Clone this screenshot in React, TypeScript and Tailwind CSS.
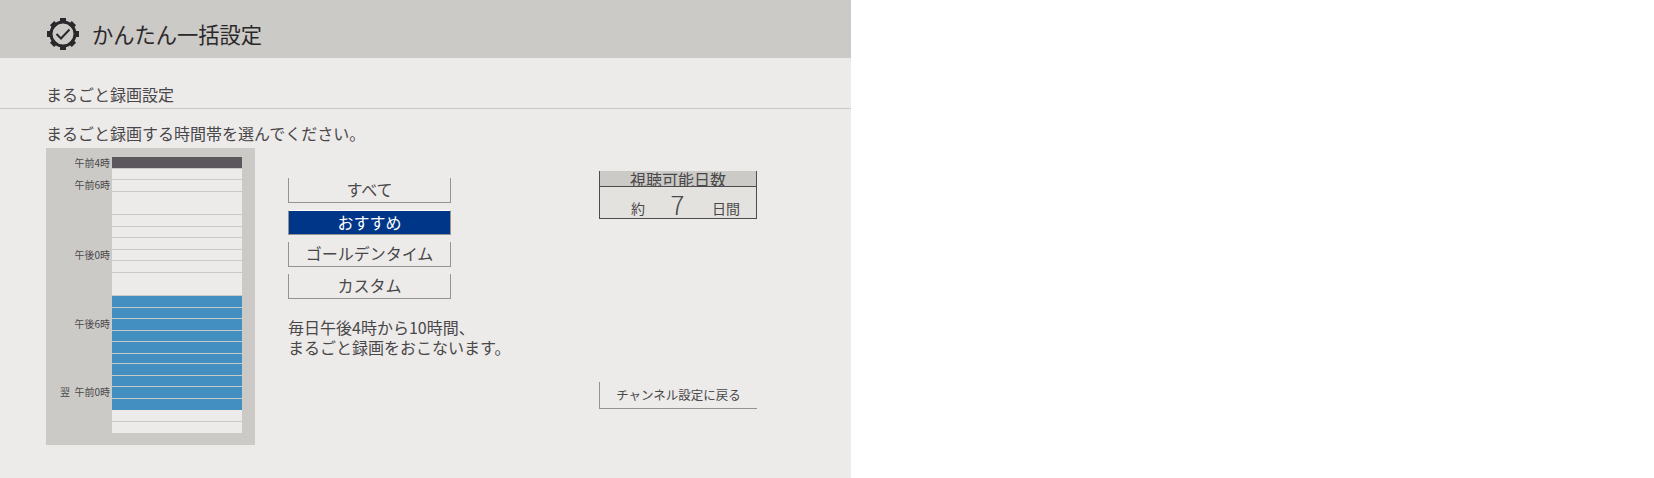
import React from 'react';

interface Slot {
  height: string;
  tone: 'dark' | 'blue' | 'empty';
  label?: string;
  noLine?: boolean;
}

const slots: Slot[] = [
  { height: 'h-[11px]', tone: 'dark', label: '午前4時', noLine: true },
  { height: 'h-[11px]', tone: 'empty' },
  { height: 'h-[12px]', tone: 'empty', label: '午前6時' },
  { height: 'h-[23px]', tone: 'empty' },
  { height: 'h-[12px]', tone: 'empty' },
  { height: 'h-[11px]', tone: 'empty' },
  { height: 'h-[12px]', tone: 'empty' },
  { height: 'h-[11px]', tone: 'empty', label: '午後0時' },
  { height: 'h-[12px]', tone: 'empty' },
  { height: 'h-[23px]', tone: 'empty' },
  { height: 'h-[12px]', tone: 'blue' },
  { height: 'h-[11px]', tone: 'blue' },
  { height: 'h-[12px]', tone: 'blue', label: '午後6時' },
  { height: 'h-[11px]', tone: 'blue' },
  { height: 'h-[12px]', tone: 'blue' },
  { height: 'h-[10px]', tone: 'blue' },
  { height: 'h-[12px]', tone: 'blue' },
  { height: 'h-[11px]', tone: 'blue' },
  { height: 'h-[12px]', tone: 'blue', label: '翌  午前0時' },
  { height: 'h-[12px]', tone: 'blue' },
  { height: 'h-[11px]', tone: 'empty', noLine: true },
  { height: 'h-[12px]', tone: 'empty' },
];

const toneClass = {
  dark: 'bg-[#5c575c]',
  blue: 'bg-[#448fc2]',
  empty: 'bg-[#ecebe9]',
};

const GearCheck = () => (
  <svg viewBox="0 0 32 32" className="w-[32px] h-[32px] shrink-0">
    <g fill="#2b282b">
      <rect x="13" y="0" width="6" height="5" />
      <rect x="13" y="27" width="6" height="5" />
      <rect x="0" y="13" width="5" height="6" />
      <rect x="27" y="13" width="5" height="6" />
      <rect x="13" y="0.5" width="6" height="5" transform="rotate(45 16 16)" />
      <rect x="13" y="0.5" width="6" height="5" transform="rotate(135 16 16)" />
      <rect x="13" y="0.5" width="6" height="5" transform="rotate(225 16 16)" />
      <rect x="13" y="0.5" width="6" height="5" transform="rotate(315 16 16)" />
    </g>
    <circle cx="16" cy="16" r="12" fill="none" stroke="#2b282b" strokeWidth="3" />
    <path d="M9.5 16l4.5 4.5 8.5-9" fill="none" stroke="#2b282b" strokeWidth="2" />
  </svg>
);

const ModeButton = ({ label, active = false }: { label: string; active?: boolean }) => (
  <button
    className={
      active
        ? 'h-[25px] w-full pb-[1px] flex items-center justify-center border-x border-b border-t border-x-[#949391] border-b-[#949391] border-t-white bg-[#003687] text-white text-[16px] leading-none'
        : 'h-[25px] w-full pb-[2px] flex items-center justify-center border-x border-b border-[#949391] text-[#4a474a] text-[16px] leading-none'
    }
  >
    {label}
  </button>
);

export default function App() {
  return (
    <div className="w-[1654px] h-[478px] bg-white font-['Noto_Sans_CJK_JP',sans-serif] font-normal">
      <div className="w-[851px] h-full bg-[#ecebe9] text-[#4a474a]">
        <header className="h-[58px] bg-[#cbcac6] flex items-center pl-[47px] pt-[9px] gap-[14px]">
          <GearCheck />
          <h1 className="text-[21.25px] leading-none font-normal text-[#2b282b] -translate-x-px">かんたん一括設定</h1>
        </header>

        <div className="h-[51px] border-b border-[#c9c8c5] flex items-end pl-[46px] pb-[4px]">
          <h2 className="text-[16px] leading-[20px]">まるごと録画設定</h2>
        </div>

        <p className="pl-[46px] pt-[14px] h-[39px] text-[16px] leading-[20px]">
          まるごと録画する時間帯を選んでください。
        </p>

        <div className="flex pl-[46px]">
          <div className="w-[209px] h-[297px] bg-[#cbcac6] pt-[9px] pr-[13px]">
            {slots.map((slot, i) => (
              <div key={i} className={`${slot.height} flex`}>
                <div className="w-[66px] pr-[2px] flex items-center justify-end text-[10px] leading-none whitespace-pre text-[#4a474a]">
                  {slot.label}
                </div>
                <div className={`flex-1 ${toneClass[slot.tone]} ${slot.noLine ? '' : 'border-t border-[#c8c9c9]'}`} />
              </div>
            ))}
          </div>

          <div className="w-[163px] ml-[33px] pt-[30px]">
            <div className="flex flex-col gap-[7px]">
              <ModeButton label="すべて" />
              <ModeButton label="おすすめ" active />
              <ModeButton label="ゴールデンタイム" />
              <ModeButton label="カスタム" />
            </div>
            <p className="mt-[18px] text-[16px] leading-[20px] whitespace-nowrap">
              毎日午後4時から10時間、
              <br />
              まるごと録画をおこないます。
            </p>
          </div>

          <div className="w-[158px] ml-[148px] pt-[23px]">
            <div className="border-x border-b border-[#4e4b4e] bg-[#e3e2de]">
              <div className="h-[16px] bg-[#cbcac6] border-b border-[#4e4b4e] flex items-center justify-center text-[16px] leading-none overflow-hidden">
                視聴可能日数
              </div>
              <div className="h-[31px] flex items-end justify-between pl-[31px] pr-[16px] pb-[1px] text-[14px] leading-[18px]">
                <span>約</span>
                <span className="text-[26px] leading-[26px] font-light -translate-x-px">7</span>
                <span>日間</span>
              </div>
            </div>
            <button className="mt-[163px] h-[27px] w-full border-l border-b border-[#949391] flex items-center justify-center text-[12.5px] leading-none">
              チャンネル設定に戻る
            </button>
          </div>
        </div>
      </div>
    </div>
  );
}
